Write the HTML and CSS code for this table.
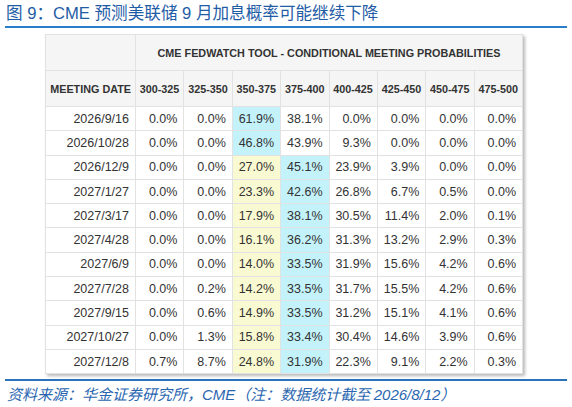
FILE: index.html
```html
<!DOCTYPE html>
<html lang="zh">
<head>
<meta charset="UTF-8">
<title>CME FedWatch</title>
<link rel="stylesheet" href="styles.css">
</head>
<body>
<div class="page">
  <div class="title">图 9：CME 预测美联储 9 月加息概率可能继续下降</div>
  <div class="body">
    <table class="fw">
      <colgroup>
        <col class="col-date">
        <col><col><col><col><col><col><col><col>
      </colgroup>
      <tr class="h1">
        <th></th>
        <th colspan="8">CME FEDWATCH TOOL - CONDITIONAL MEETING PROBABILITIES</th>
      </tr>
      <tr class="h2">
        <th>MEETING DATE</th>
        <th>300-325</th><th>325-350</th><th>350-375</th><th>375-400</th>
        <th>400-425</th><th>425-450</th><th>450-475</th><th>475-500</th>
      </tr>
      <tr><td>2026/9/16</td><td>0.0%</td><td>0.0%</td><td class="c">61.9%</td><td>38.1%</td><td>0.0%</td><td>0.0%</td><td>0.0%</td><td>0.0%</td></tr>
      <tr><td>2026/10/28</td><td>0.0%</td><td>0.0%</td><td class="c">46.8%</td><td>43.9%</td><td>9.3%</td><td>0.0%</td><td>0.0%</td><td>0.0%</td></tr>
      <tr><td>2026/12/9</td><td>0.0%</td><td>0.0%</td><td class="y">27.0%</td><td class="c">45.1%</td><td>23.9%</td><td>3.9%</td><td>0.0%</td><td>0.0%</td></tr>
      <tr><td>2027/1/27</td><td>0.0%</td><td>0.0%</td><td class="y">23.3%</td><td class="c">42.6%</td><td>26.8%</td><td>6.7%</td><td>0.5%</td><td>0.0%</td></tr>
      <tr><td>2027/3/17</td><td>0.0%</td><td>0.0%</td><td class="y">17.9%</td><td class="c">38.1%</td><td>30.5%</td><td>11.4%</td><td>2.0%</td><td>0.1%</td></tr>
      <tr><td>2027/4/28</td><td>0.0%</td><td>0.0%</td><td class="y">16.1%</td><td class="c">36.2%</td><td>31.3%</td><td>13.2%</td><td>2.9%</td><td>0.3%</td></tr>
      <tr><td>2027/6/9</td><td>0.0%</td><td>0.0%</td><td class="y">14.0%</td><td class="c">33.5%</td><td>31.9%</td><td>15.6%</td><td>4.2%</td><td>0.6%</td></tr>
      <tr><td>2027/7/28</td><td>0.0%</td><td>0.2%</td><td class="y">14.2%</td><td class="c">33.5%</td><td>31.7%</td><td>15.5%</td><td>4.2%</td><td>0.6%</td></tr>
      <tr><td>2027/9/15</td><td>0.0%</td><td>0.6%</td><td class="y">14.9%</td><td class="c">33.5%</td><td>31.2%</td><td>15.1%</td><td>4.1%</td><td>0.6%</td></tr>
      <tr><td>2027/10/27</td><td>0.0%</td><td>1.3%</td><td class="y">15.8%</td><td class="c">33.4%</td><td>30.4%</td><td>14.6%</td><td>3.9%</td><td>0.6%</td></tr>
      <tr><td>2027/12/8</td><td>0.7%</td><td>8.7%</td><td class="y">24.8%</td><td class="c">31.9%</td><td>22.3%</td><td>9.1%</td><td>2.2%</td><td>0.3%</td></tr>
    </table>
  </div>
  <div class="source">资料来源：华金证券研究所，<span class="latin">CME</span>（注：数据统计截至 <span class="latin">2026/8/12</span>）</div>
</div>
</body>
</html>
```

FILE: styles.css
```css
html, body { margin: 0; padding: 0; background: #fff; }
body { font-family: "Liberation Sans", "Noto Sans CJK SC", sans-serif; }

.page { width: 562px; margin-left: 5px; padding-top: 3px; }

.title {
  font-family: "Liberation Sans", "Noto Sans CJK SC", sans-serif;
  font-size: 16.6px;
  line-height: 21px;
  color: #1f5ca6;
  padding-left: 1px;
  padding-bottom: 2px;
  border-bottom: 2px solid #2a7dc9;
}

.body { padding: 6px 0 5px 40px; }

.fw {
  border-collapse: collapse;
  box-shadow: 2px 2px 3px rgba(0,0,0,0.28);
  font-size: 12.5px;
  color: #333;
  table-layout: fixed;
  width: 478px;
}
.fw .col-date { width: 90px; }
.fw th, .fw td {
  border: 1px solid #e2e2e2;
  padding: 0 6px 0 0;
  text-align: right;
  white-space: nowrap;
  overflow: hidden;
}
.fw th {
  background: #f5f5f5;
  font-weight: bold;
  font-size: 10.8px;
  color: #333;
}
.fw .h1 th { height: 35px; text-align: center; padding: 0; }
.fw .h2 th { height: 35px; padding-right: 4px; }
.fw td { height: 23.3px; background: #fff; }
.fw td.c { background: #c4f2fa; }
.fw td.y { background: #fafad2; }

.source {
  border-top: 2px solid #2a72bb;
  padding-top: 4px;
  padding-left: 2px;
  font-size: 15px;
  line-height: 18px;
  font-style: italic;
  color: #2a66b0;
  font-family: "Noto Sans CJK SC", sans-serif;
}
.source .latin { font-family: "Liberation Sans", sans-serif; }
```
